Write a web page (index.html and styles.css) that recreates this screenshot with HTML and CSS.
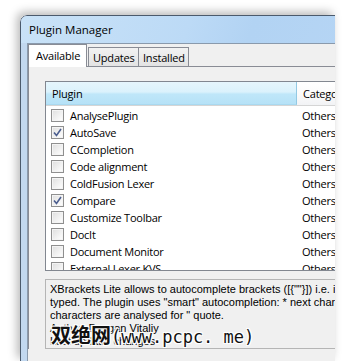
FILE: index.html
```html
<!DOCTYPE html>
<html lang="en">
<head>
    <meta charset="UTF-8">
    <title>Plugin Manager</title>
    <link rel="stylesheet" href="styles.css">
</head>
<body>
    <div class="crop">
        <div class="window">
            <div class="titlebar">Plugin Manager</div>
            <div class="client">
                <div class="tabs">
                    <span class="tab active">Available</span>
                    <span class="tab">Updates</span>
                    <span class="tab">Installed</span>
                </div>
                <div class="page">
                    <div class="list">
                        <div class="list-head">
                            <div class="col-name hot">Plugin</div>
                            <div class="col-cat">Category</div>
                        </div>
                        <div class="rows">
                            <div class="row"><span class="check"></span><span class="name">AnalysePlugin</span><span class="cat">Others</span></div>
                            <div class="row"><span class="check on"><svg viewBox="0 0 13 13"><path d="M3 6.5 L5.5 9.5 L10 3"/></svg></span><span class="name">AutoSave</span><span class="cat">Others</span></div>
                            <div class="row"><span class="check"></span><span class="name">CCompletion</span><span class="cat">Others</span></div>
                            <div class="row"><span class="check"></span><span class="name">Code alignment</span><span class="cat">Others</span></div>
                            <div class="row"><span class="check"></span><span class="name">ColdFusion Lexer</span><span class="cat">Others</span></div>
                            <div class="row"><span class="check on"><svg viewBox="0 0 13 13"><path d="M3 6.5 L5.5 9.5 L10 3"/></svg></span><span class="name">Compare</span><span class="cat">Others</span></div>
                            <div class="row"><span class="check"></span><span class="name">Customize Toolbar</span><span class="cat">Others</span></div>
                            <div class="row"><span class="check"></span><span class="name">DocIt</span><span class="cat">Others</span></div>
                            <div class="row"><span class="check"></span><span class="name">Document Monitor</span><span class="cat">Others</span></div>
                            <div class="row"><span class="check"></span><span class="name">External Lexer KVS</span><span class="cat">Others</span></div>
                        </div>
                    </div>
                    <div class="desc">
                        <p>XBrackets Lite allows to autocomplete brackets ([{""}]) i.e. if "(" is</p>
                        <p>typed. The plugin uses "smart" autocompletion: * next characters</p>
                        <p>characters are analysed for " quote.</p>
                        <p>Author: Dovgan Vitaliy</p>
                        <p>Last update: changes</p>
                        <div class="watermark">双绝网<span class="wm-latin">(www.pcpc. me)</span></div>
                    </div>
                </div>
            </div>
        </div>
    </div>
</body>
</html>
```

FILE: styles.css
```css
body {
    margin: 0;
    background: #ffffff;
    width: 344px;
    height: 361px;
    overflow: hidden;
    padding: 15px 0 0 20px;
    box-sizing: border-box;
    font-family: "Open Sans", "Noto Sans", sans-serif;
}

.crop {
    width: 315px;
    height: 346px;
    overflow: hidden;
    border-radius: 7px 0 0 0;
    box-shadow: -3px -3px 10px rgba(0, 0, 0, 0.28);
}

.window {
    width: 420px;
    height: 400px;
    border: 1px solid #4b5a6c;
    border-radius: 7px 0 0 0;
    background: #c2d8ef;
    padding-left: 6px;
    box-sizing: border-box;
}

.titlebar {
    height: 27px;
    margin-left: -6px;
    padding-left: 8px;
    font-size: 11.5px;
    line-height: 28px;
    color: #000;
    border-radius: 6px 0 0 0;
    background: linear-gradient(110deg, #c9e2f7 0%, #bcdaf6 40%, #b2d3f3 55%, #b8d6f5 100%);
}

.client {
    background: #f0f0f0;
    border-top: 1px solid #8a9aac;
    border-left: 1px solid #8a9aac;
    height: 400px;
}

.tabs {
    display: flex;
    align-items: flex-end;
    height: 22px;
    font-size: 11px;
    letter-spacing: -0.2px;
}

.tab {
    height: 18px;
    line-height: 19px;
    width: 45px;
    padding: 0 0 0 4px;
    border: 1px solid #898c95;
    border-bottom: none;
    background: linear-gradient(#f2f2f2, #e3e3e3);
    color: #000;
    margin-left: -1px;
}

.tab.active {
    height: 22px;
    line-height: 21px;
    width: 50px;
    padding: 0 0 0 7px;
    margin-left: 0;
    margin-right: 2px;
    margin-bottom: -1px;
    background: #ffffff;
    position: relative;
    z-index: 1;
}

.page {
    border-top: 1px solid #898c95;
    border-left: 1px solid #898c95;
    padding: 14px 0 0 16px;
}

.list {
    width: 400px;
    height: 188px;
    border: 1px solid #828790;
    background: #fff;
    overflow: hidden;
}

.list-head {
    display: flex;
    height: 23px;
    border-bottom: 1px solid #d5d5d5;
    font-size: 11px;
    letter-spacing: -0.2px;
    line-height: 23px;
}

.col-name {
    width: 244px;
    padding-left: 6px;
    border-right: 1px solid #93c9e3;
    border-bottom: 1px solid #a9d9f0;
    background: linear-gradient(#e6f6fd 0%, #dbf2fc 45%, #bfe7f9 55%, #b6e2f7 100%);
}

.col-cat {
    padding-left: 6px;
    background: linear-gradient(#ffffff 0%, #fbfbfb 50%, #f2f3f5 100%);
    flex: 1;
}

.rows {
    padding-top: 1px;
}

.row {
    display: flex;
    align-items: center;
    height: 17px;
    font-size: 11px;
    letter-spacing: -0.25px;
    color: #000;
}

.check {
    width: 11px;
    height: 11px;
    margin-left: 5px;
    border: 1px solid #8f8f8f;
    background: linear-gradient(135deg, #dedede, #f6f6f6 70%, #ffffff);
    box-shadow: inset 0 0 0 1px #f4f4f4;
    position: relative;
}

.check svg {
    position: absolute;
    left: -1px;
    top: -1px;
    width: 13px;
    height: 13px;
}

.check path {
    fill: none;
    stroke: #4c5e8f;
    stroke-width: 1.6;
}

.name {
    width: 226px;
    padding-left: 6px;
}

.cat {
    padding-left: 6px;
}

.desc {
    position: relative;
    margin-top: 8px;
    width: 400px;
    height: 70px;
    border: 1px solid #b5b5b5;
    background: #f0f0f0;
    padding: 3px 0 0 4px;
    box-sizing: border-box;
    font-family: "Liberation Sans", Arial, sans-serif;
    font-size: 11px;
    line-height: 13px;
    color: #000;
    overflow: hidden;
}

.desc p {
    margin: 0;
    white-space: nowrap;
}

.watermark {
    position: absolute;
    left: 5px;
    top: 43px;
    font-family: "Noto Sans CJK SC", sans-serif;
    font-size: 20px;
    line-height: 24px;
    font-weight: bold;
    color: #111;
    white-space: nowrap;
    text-shadow: 1px 1px 0 #fff, -1px -1px 0 #fff, 1px -1px 0 #fff, -1px 1px 0 #fff, 0 0 3px #fff;
}

.wm-latin {
    font-family: "DejaVu Sans Mono", monospace;
    font-size: 17px;
    font-weight: normal;
}
```
